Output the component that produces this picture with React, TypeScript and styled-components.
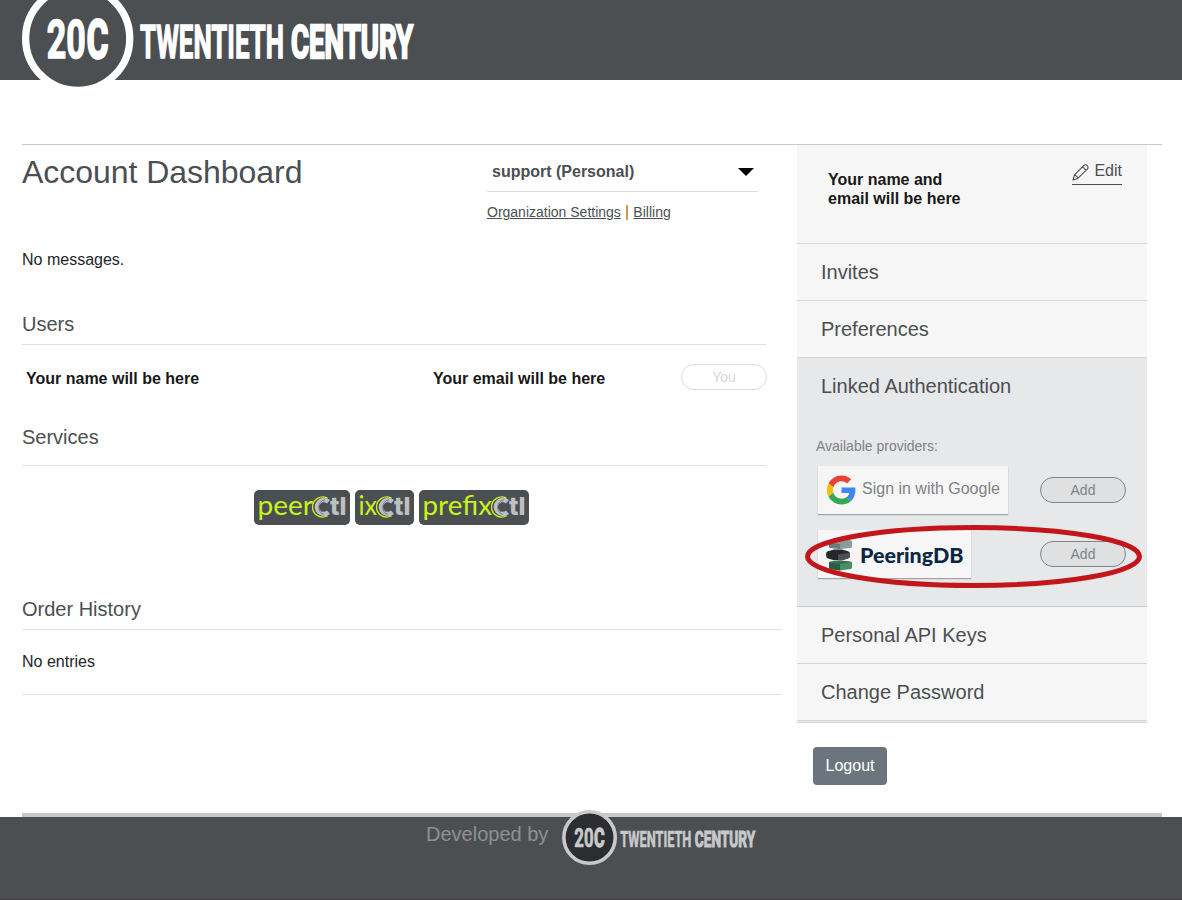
import React from "react";
import styled, { createGlobalStyle } from "styled-components";

const Global = createGlobalStyle`
  * { box-sizing: border-box; }
  body { margin: 0; background: #fff; color: #212529; font: 16px/24px "Liberation Sans", Arial, sans-serif; }
`;

const Page = styled.div`
  height: 900px;
  display: flex;
  flex-direction: column;
`;

const Header = styled.header`
  height: 80px;
  flex: none;
  padding-left: 22px;
  background: #4b4f52;
`;

const HeaderLogo = styled.svg`
  display: block;
  overflow: visible;
`;

const Main = styled.main`
  display: flex;
  height: 673px;
  margin: 64px 20px 0 22px;
  border-top: 1px solid #c8c8c8;
  border-bottom: 4px solid #c8c9cb;
`;

const Content = styled.div`
  width: 775px;
  padding-right: 15px;
`;

const TopRow = styled.div`
  display: flex;
  height: 103px;
`;

const Title = styled.h1`
  width: 465px;
  margin: 8px 0 0;
  font-size: 32px;
  line-height: 38px;
  font-weight: 400;
  letter-spacing: -0.04px;
  color: #4b4f52;
`;

const OrgPanel = styled.div`
  width: 271px;
`;

const OrgSelect = styled.div`
  display: flex;
  justify-content: space-between;
  align-items: center;
  height: 47px;
  padding: 7px 4px 0 5px;
  border-bottom: 1px solid #dcdcdc;
  font-weight: 700;
  color: #4b4f52;
`;

const Caret = styled.span`
  border: 8px solid transparent;
  border-top-color: #000;
  border-bottom-width: 0;
`;

const OrgLinks = styled.div`
  display: flex;
  gap: 5px;
  padding-top: 10px;
  font-size: 14px;
  line-height: 21px;
`;

const OrgLink = styled.a`
  color: #4b4f52;
  text-decoration: underline;
`;

const Divider = styled.span`
  width: 2px;
  height: 15px;
  margin: 3px 0.5px 0 0;
  background: #cf9a55;
`;

const Plain = styled.p`
  margin: 0;
  color: #212529;
`;

const SectionTitle = styled.h2<{ $top: number; $wide?: boolean; $gap?: number }>`
  width: ${(p) => (p.$wide ? 760 : 745)}px;
  margin: ${(p) => p.$top}px 0 0;
  padding-bottom: ${(p) => p.$gap ?? 8}px;
  border-bottom: 1px solid #dee0e2;
  font-size: 20px;
  line-height: 24px;
  font-weight: 400;
  color: #4b4f52;
`;

const UserRow = styled.div`
  display: flex;
  align-items: center;
  width: 745px;
  height: 64px;
  padding-left: 4px;
  font-weight: 700;
  color: #181818;
`;

const UserName = styled.span`
  width: 407px;
  padding-top: 3px;
`;

const UserEmail = styled.span`
  flex: 1;
  padding-top: 3px;
`;

const Pill = styled.button<{ $faint?: boolean }>`
  width: 86px;
  height: 26px;
  padding: 0;
  border: 1px solid ${(p) => (p.$faint ? "#dcddde" : "#818487")};
  border-radius: 13px;
  background: ${(p) => (p.$faint ? "transparent" : "#dfe0e1")};
  color: ${(p) => (p.$faint ? "#d6d7d8" : "#808285")};
  font: 14px/24px "Liberation Sans", Arial, sans-serif;
`;

const Services = styled.div`
  display: flex;
  gap: 5px;
  height: 131px;
  padding: 24px 0 0 232px;
`;

const ServiceBadge = styled.svg`
  display: block;
  border-radius: 5px;
  background: #4b4f52;
`;

const Orders = styled.div`
  height: 65px;
  padding-top: 20px;
  border-bottom: 1px solid #dee0e2;
`;

const Sidebar = styled.aside`
  width: 350px;
`;

const Profile = styled.section`
  display: flex;
  justify-content: space-between;
  height: 99px;
  padding: 25px 25px 0 31px;
  background: #f6f6f6;
  border-bottom: 1px solid #d3d5d6;
`;

const ProfileText = styled.div`
  font-weight: 700;
  line-height: 19px;
  color: #181818;
`;

const EditLink = styled.a`
  display: flex;
  gap: 5px;
  height: 27px;
  margin-top: -12px;
  padding-top: 1px;
  border-bottom: 1px solid #4b4f52;
  color: #4b4f52;
`;

const PencilIcon = styled.svg`
  margin-top: 5px;
`;

const MenuItem = styled.div`
  height: 57px;
  padding: 16px 24px;
  background: #f6f6f6;
  border-bottom: 1px solid #d3d5d6;
  font-size: 20px;
  color: #4b4f52;
`;

const MenuEnd = styled.div`
  height: 2px;
  background: #e9eaeb;
  border-bottom: 1px solid #d3d5d6;
`;

const LinkedAuth = styled.section`
  position: relative;
  height: 249px;
  padding: 16px 21px 0;
  background: #e7e8ea;
  border-bottom: 1px solid #c5c7c8;
`;

const LinkedTitle = styled.h3`
  margin: 0 3px;
  font-size: 20px;
  line-height: 24px;
  font-weight: 400;
  color: #4b4f52;
`;

const ProvidersLabel = styled.div`
  margin: 38px 0 9px -2px;
  font-size: 14px;
  line-height: 21px;
  color: #808285;
`;

const ProviderRow = styled.div`
  display: flex;
  align-items: center;
  justify-content: space-between;
  height: 48px;
  margin-bottom: 16px;
`;

const ProviderCard = styled.div<{ $width: number }>`
  display: flex;
  align-items: center;
  width: ${(p) => p.$width}px;
  height: 48px;
  padding-left: 9px;
  background: #f6f6f6;
  box-shadow: 0 1px 1px rgba(0, 0, 0, 0.3);
  color: #808285;
`;

const GoogleText = styled.span`
  margin: -3px 0 0 6px;
`;

const PeeringLogo = styled.svg`
  overflow: visible;
`;

const Highlight = styled.svg`
  position: absolute;
  left: 7px;
  top: 166px;
`;

const Logout = styled.button`
  width: 74px;
  height: 38px;
  margin: 24px 0 0 16px;
  padding: 0;
  border: 0;
  border-radius: 4px;
  background: #6c757d;
  color: #fff;
  font: 16px/24px "Liberation Sans", Arial, sans-serif;
`;

const Footer = styled.footer`
  display: flex;
  height: 83px;
  padding-left: 426px;
  background: #4b4f52;
  border-bottom: 1px solid #453f44;
`;

const Developed = styled.span`
  width: 136px;
  padding-top: 5px;
  font-size: 20px;
  color: #8e9092;
`;

const FooterLogo = styled.svg`
  margin-top: -7px;
  overflow: visible;
`;

type LogoProps = { color: string; fill: string; ring: number };

function BrandMark({ color, fill, ring }: LogoProps) {
  return (
    <g fontFamily="Roboto, sans-serif" fontWeight="700" fill={color} stroke={color}>
      <circle cx="55.7" cy="55.7" r={55.7 - ring / 2} fill={fill} strokeWidth={ring} />
      <text x="24.8" y="75.5" fontSize="54" strokeWidth="1.5" textLength="39" lengthAdjust="spacingAndGlyphs">20</text>
      <text x="64.8" y="75.5" fontSize="54" strokeWidth="2.8" textLength="21.5" lengthAdjust="spacingAndGlyphs">C</text>
      <text x="118" y="75" fontSize="46" strokeWidth="1.3" textLength="144" lengthAdjust="spacingAndGlyphs">TWENTIETH</text>
      <text x="269" y="75" fontSize="46" strokeWidth="2.4" textLength="122" lengthAdjust="spacingAndGlyphs">CENTURY</text>
    </g>
  );
}

function Badge({ name, width }: { name: string; width: number }) {
  const c = width - 27;
  return (
    <ServiceBadge width={width} height="35" viewBox={`0 0 ${width} 35`}>
      <text x="3.5" y="25.3" fontFamily="Lato, sans-serif" fontWeight="400" fontSize="26.5" fill="#c8f31d" textLength={c - 13.5} lengthAdjust="spacingAndGlyphs">{name}</text>
      <path d={`M${c + 4.5} 8.3A10 10 0 1 0 ${c + 4.5} 25.7`} fill="none" stroke="#c8f31d" strokeWidth="1.3" />
      <path d={`M${c + 5.5} 11.8A6.9 6.9 0 1 0 ${c + 5.5} 22.2`} fill="none" stroke="#bdbfc1" strokeWidth="4.6" />
      <path d={`M${c + 2} 9.8A7.6 7.6 0 0 0 ${c + 1} 24.5M${c + 1} 11.8A5.7 5.7 0 0 0 ${c - 1} 22`} fill="none" stroke="#4b4f52" strokeWidth="0.6" />
      <text x={c + 7} y="25.3" fontFamily="Inter, sans-serif" fontWeight="800" fontSize="25" fill="#bdbfc1" textLength="16.5" lengthAdjust="spacingAndGlyphs">tl</text>
    </ServiceBadge>
  );
}

export default function App() {
  return (
    <Page>
      <Global />
      <Header>
        <HeaderLogo width="396" height="80" viewBox="0 17.3 396 80">
          <BrandMark color="#fff" fill="#4b4f52" ring={7.3} />
        </HeaderLogo>
      </Header>
      <Main>
        <Content>
          <TopRow>
            <Title>Account Dashboard</Title>
            <OrgPanel>
              <OrgSelect>support (Personal)<Caret /></OrgSelect>
              <OrgLinks>
                <OrgLink>Organization Settings</OrgLink>
                <Divider />
                <OrgLink>Billing</OrgLink>
              </OrgLinks>
            </OrgPanel>
          </TopRow>
          <Plain>No messages.</Plain>
          <SectionTitle $top={40}>Users</SectionTitle>
          <UserRow>
            <UserName>Your name will be here</UserName>
            <UserEmail>Your email will be here</UserEmail>
            <Pill $faint>You</Pill>
          </UserRow>
          <SectionTitle $top={16} $gap={16}>Services</SectionTitle>
          <Services>
            <Badge name="peer" width={96} />
            <Badge name="ix" width={59} />
            <Badge name="prefix" width={110} />
          </Services>
          <SectionTitle $top={0} $wide>Order History</SectionTitle>
          <Orders>No entries</Orders>
        </Content>
        <Sidebar>
          <Profile>
            <ProfileText>Your name and<br />email will be here</ProfileText>
            <EditLink>
              <PencilIcon width="17" height="17" viewBox="0 0 17 17" fill="none" stroke="#4b4f52" strokeWidth="1.1" strokeLinejoin="round">
                <path d="M1 16L2.4 11.2 11.6 1.6C12.6.6 14.1.6 15.2 1.6S16.3 4.2 15.3 5.2L5.8 14.4ZM2.4 11.2C3.6 11.2 5.6 12.8 5.8 14.4M10.6 2.8L14.2 6.2" />
              </PencilIcon>
              Edit
            </EditLink>
          </Profile>
          <MenuItem>Invites</MenuItem>
          <MenuItem>Preferences</MenuItem>
          <LinkedAuth>
            <LinkedTitle>Linked Authentication</LinkedTitle>
            <ProvidersLabel>Available providers:</ProvidersLabel>
            <ProviderRow>
              <ProviderCard $width={190}>
                <svg width="29" height="30" viewBox="0 0 48 48">
                  <path fill="#EA4335" d="M24 9.5c3.54 0 6.71 1.22 9.21 3.6l6.85-6.85C35.9 2.38 30.47 0 24 0 14.62 0 6.51 5.38 2.56 13.22l7.98 6.19C12.43 13.72 17.74 9.5 24 9.5z" />
                  <path fill="#4285F4" d="M46.98 24.55c0-1.57-.15-3.09-.38-4.55H24v9.02h12.94c-.58 2.96-2.26 5.48-4.78 7.18l7.73 6c4.51-4.18 7.09-10.36 7.09-17.65z" />
                  <path fill="#FBBC05" d="M10.53 28.59c-.48-1.45-.76-2.99-.76-4.59s.27-3.14.76-4.59l-7.98-6.19C.92 16.46 0 20.12 0 24s.92 7.54 2.56 10.78l7.97-6.19z" />
                  <path fill="#34A853" d="M24 48c6.48 0 11.93-2.13 15.89-5.81l-7.73-6c-2.15 1.45-4.92 2.3-8.16 2.3-6.26 0-11.57-4.22-13.47-9.91l-7.98 6.19C6.51 42.62 14.62 48 24 48z" />
                </svg>
                <GoogleText>Sign in with Google</GoogleText>
              </ProviderCard>
              <Pill>Add</Pill>
            </ProviderRow>
            <ProviderRow>
              <ProviderCard $width={153}>
                <PeeringLogo width="140" height="40" viewBox="-1 0 140 40">
                  <path d="M1 8Q1 6.6 2.5 6.2L12 4.5 22.5 6.2Q24 6.6 24 8V12.4Q24 13.8 22.5 14L12 15 2.5 14Q1 13.8 1 12.4Z" fill="#8a9b9d" />
                  <path d="M1 8.4L12 10V15L2.5 14Q1 13.8 1 12.4Z" fill="#6b7c80" />
                  <path d="M-1.8 19.2Q-1.8 17.8 0 17.3L6 15.6H14L20 17.3Q21.8 17.8 21.8 19.2V22.4Q21.8 23.9 20 24.4L14 26.2H6L0 24.4Q-1.8 23.9 -1.8 22.4Z" fill="#26282c" />
                  <path d="M10 20.6L21.8 18.8V22.4Q21.8 23.9 20 24.4L14 26.2H10Z" fill="#4d505c" />
                  <path d="M1 28Q12 25.6 24 28V33.6Q24 34.8 22.5 35L12 36.4 2.5 35Q1 34.8 1 33.6Z" fill="#4a8f66" />
                  <path d="M1 28L12 30V36.4L2.5 35Q1 34.8 1 33.6Z" fill="#23603e" />
                  <path d="M1 28Q12 25.6 24 28L12 30Z" fill="#37724f" />
                  <text x="32" y="29.3" fontFamily="Lato, sans-serif" fontWeight="900" fontSize="20.5" fill="#0c2744" textLength="103.5" lengthAdjust="spacingAndGlyphs">PeeringDB</text>
                </PeeringLogo>
              </ProviderCard>
              <Pill>Add</Pill>
            </ProviderRow>
            <Highlight width="339" height="64" viewBox="0 0 339 64">
              <ellipse cx="169.5" cy="32.5" rx="166" ry="29" fill="none" stroke="#c3151c" strokeWidth="5" />
            </Highlight>
          </LinkedAuth>
          <MenuItem>Personal API Keys</MenuItem>
          <MenuItem>Change Password</MenuItem>
          <MenuEnd />
          <Logout>Logout</Logout>
        </Sidebar>
      </Main>
      <Footer>
        <Developed>Developed by</Developed>
        <FooterLogo width="204" height="55" viewBox="0 0 413 111.4">
          <BrandMark color="#c8c9cb" fill="#2c2d30" ring={7.3} />
        </FooterLogo>
      </Footer>
    </Page>
  );
}
